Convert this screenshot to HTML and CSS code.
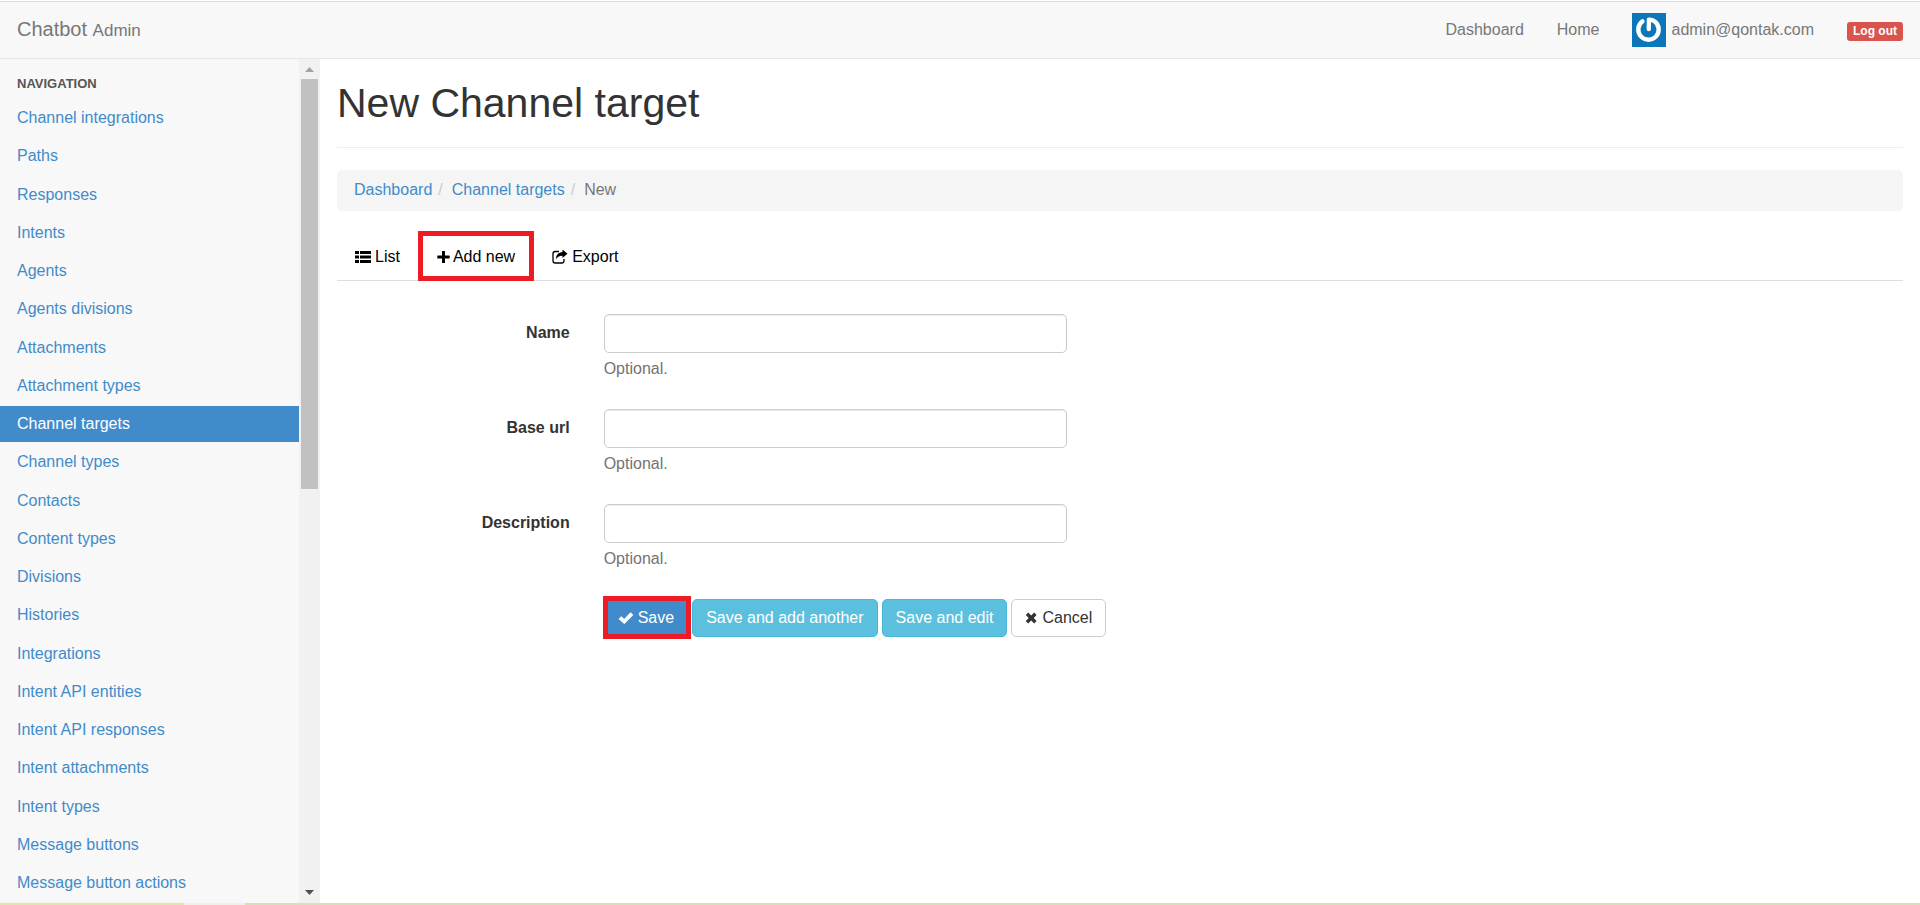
FILE: index.html
```html
<!DOCTYPE html>
<html lang="en">
<head>
<meta charset="utf-8">
<title>New Channel target</title>
<link rel="stylesheet" href="styles.css">
</head>
<body>
<header class="navbar">
  <a class="brand" href="#">Chatbot <small>Admin</small></a>
  <nav class="top-links">
    <a href="#">Dashboard</a>
    <a href="#">Home</a>
    <a class="user" href="#">
      <svg class="avatar" viewBox="0 0 34 34" aria-hidden="true"><rect width="34" height="34" fill="#0b76b8"/><path d="M10.500 8.300A10.200 10.200 0 1 0 22.500 8.300Q20 6.600 16.800 6.800V16" fill="none" stroke="#fff" stroke-width="4.400" stroke-linecap="round" stroke-linejoin="round"/><path d="M13.600 4.500V13" stroke="#0b76b8" stroke-width="1.400"/></svg>
      <span>admin@qontak.com</span>
    </a>
    <a class="logout" href="#">Log out</a>
  </nav>
</header>
<div class="layout">
  <aside class="sidebar">
    <div class="sidebar-body">
      <h2 class="nav-title">NAVIGATION</h2>
      <nav class="side-links">
        <a href="#">Channel integrations</a>
        <a href="#">Paths</a>
        <a href="#">Responses</a>
        <a href="#">Intents</a>
        <a href="#">Agents</a>
        <a href="#">Agents divisions</a>
        <a href="#">Attachments</a>
        <a href="#">Attachment types</a>
        <a class="active" href="#">Channel targets</a>
        <a href="#">Channel types</a>
        <a href="#">Contacts</a>
        <a href="#">Content types</a>
        <a href="#">Divisions</a>
        <a href="#">Histories</a>
        <a href="#">Integrations</a>
        <a href="#">Intent API entities</a>
        <a href="#">Intent API responses</a>
        <a href="#">Intent attachments</a>
        <a href="#">Intent types</a>
        <a href="#">Message buttons</a>
        <a href="#">Message button actions</a>
      </nav>
    </div>
    <div class="scrollbar" aria-hidden="true">
      <svg class="arrow" viewBox="0 0 21 20"><path d="M6 13 10.500 8 15 13z" fill="#a3a3a3"/></svg>
      <div class="track"><div class="thumb"></div></div>
      <svg class="arrow" viewBox="0 0 21 20"><path d="M6 7 15 7 10.500 12z" fill="#505050"/></svg>
    </div>
  </aside>
  <main class="content">
    <h1 class="page-title">New Channel target</h1>
    <ol class="breadcrumb">
      <li><a href="#">Dashboard</a></li>
      <li><a href="#">Channel targets</a></li>
      <li class="current">New</li>
    </ol>
    <nav class="tabs">
      <a href="#"><svg class="icon" viewBox="0 0 16 16"><path d="M0 2h4v3H0zM5 2h11v3H5zM0 6.500h4v3H0zM5 6.500h11v3H5zM0 11h4v3H0zM5 11h11v3H5z"/></svg>List</a>
      <a class="marked" href="#"><svg class="icon" viewBox="0 0 16 16"><path d="M5 2.300Q5 2 5.400 2H7.600Q8 2 8 2.300V6.500H12.300Q12.700 6.500 12.700 6.900V9.100Q12.700 9.500 12.300 9.500H8V13.700Q8 14 7.600 14H5.400Q5 14 5 13.700V9.500H.7Q.3 9.500 .3 9.100V6.900Q.3 6.500 .7 6.500H5z"/></svg>Add new</a>
      <a href="#"><svg class="icon" viewBox="0 0 16 16"><path d="M7 2.500H3.200Q1 2.500 1 4.700V11.800Q1 14 3.200 14H9.800Q12 14 12 11.800V10" fill="none" stroke="#000" stroke-width="1.300"/><path d="M10.500 .5 15.500 4.700 10.500 9V6.700Q6 6.500 3.700 10.500 4 3.500 10.500 3z"/></svg>Export</a>
    </nav>
    <form class="form">
      <label for="name">Name</label>
      <div class="field"><input id="name" type="text"><p>Optional.</p></div>
      <label for="base-url">Base url</label>
      <div class="field"><input id="base-url" type="text"><p>Optional.</p></div>
      <label for="description">Description</label>
      <div class="field"><input id="description" type="text"><p>Optional.</p></div>
      <div class="actions">
        <button class="btn primary" type="submit"><svg class="icon" viewBox="0 0 16 16"><path d="M.8 8.700 3 6.500Q3.300 6.200 3.600 6.500L6.200 8.900 12.300 2.600Q12.600 2.300 12.900 2.600L15.100 4.700Q15.400 5 15.100 5.300L6.600 13.800Q6.200 14.100 5.900 13.800L.8 9.200Q.5 8.900 .8 8.700z"/></svg>Save</button>
        <button class="btn info" type="submit">Save and add another</button>
        <button class="btn info" type="submit">Save and edit</button>
        <button class="btn plain" type="button"><svg class="icon" viewBox="1 0 13 16"><path d="M1.800 5 4.200 2.500 7.200 5.500 10.200 2.500 12.600 5 9.700 8 12.600 11 10.200 13.500 7.200 10.500 4.200 13.500 1.800 11 4.700 8z"/></svg>Cancel</button>
      </div>
    </form>
  </main>
</div>
<footer class="strip"></footer>
</body>
</html>
```
FILE: styles.css
```css
* { box-sizing: border-box; }
body {
  margin: 0;
  height: 100vh;
  display: flex;
  flex-direction: column;
  overflow: hidden;
  font: 16px/22px "Liberation Sans", Arial, sans-serif;
  color: #333;
  background: #fff;
}
a { color: #428bca; text-decoration: none; }
.navbar {
  flex: none;
  display: flex;
  justify-content: space-between;
  align-items: center;
  height: 58px;
  margin-top: 1px;
  padding: 0 17px;
  background: #f8f8f8;
  border-top: 1px solid #dadcdc;
  border-bottom: 1px solid #e7e7e7;
}
.navbar a { color: #777; }
.brand { font-size: 20px; }
.brand small { font-size: 17px; }
.top-links { display: flex; align-items: center; gap: 33px; }
.user { display: flex; align-items: center; gap: 5px; }
.avatar { width: 34px; height: 34px; }
.navbar .logout {
  padding: 0 6px;
  font-size: 12px;
  line-height: 19px;
  font-weight: bold;
  color: #fff;
  background: #d9534f;
  border-radius: 3px;
  margin-top: 3px;
}
.layout { flex: 1; min-height: 0; display: flex; }
.sidebar { flex: none; width: 320px; display: flex; background: #f8f8f8; }
.sidebar-body { flex: 1; display: flex; flex-direction: column; padding: 15px 0 2px; }
.nav-title { margin: 0 0 6px; padding: 0 17px; font-size: 13px; line-height: 20px; color: #555; }
.side-links { flex: 1; display: flex; flex-direction: column; justify-content: space-between; }
.side-links a { padding: 7px 17px; }
.side-links .active { color: #fff; background: #428bca; }
.scrollbar { width: 21px; display: flex; flex-direction: column; background: #f1f1f1; }
.arrow { display: block; width: 21px; height: 20px; }
.track { flex: 1; padding: 0 2px; }
.thumb { height: 51%; background: #c1c1c1; }
.content { flex: 1; padding: 0 17px; }
.page-title {
  margin: 0 0 22px;
  padding: 21px 0;
  font-size: 41px;
  line-height: 46px;
  font-weight: normal;
  border-bottom: 1px solid #eee;
}
.breadcrumb {
  display: flex;
  margin: 0 0 22px;
  padding: 9px 17px 10px;
  list-style: none;
  background: #f5f5f5;
  border-radius: 5px;
}
.breadcrumb li + li::before { content: "/"; padding: 0 9px 0 6px; color: #ccc; }
.breadcrumb .current { color: #777; }
.tabs { display: flex; gap: 1px; border-bottom: 1px solid #ddd; }
.tabs a { position: relative; display: flex; align-items: center; padding: 13px 18px 12px; color: #000; }
.icon { width: 16px; height: 16px; margin-right: 4px; fill: currentColor; }
.tabs .marked .icon { margin-right: 0; }
.marked::after, .primary::after {
  content: "";
  position: absolute;
  border: 5px solid #ed1c24;
}
.marked::after { inset: -2px -1px -1px -1px; }
.form { display: grid; grid-template-columns: 2fr 10fr; margin: 33px -17px 0; }
.form label { padding: 8px 17px; text-align: right; font-weight: bold; }
.field { padding: 0 17px 29px; }
.field input {
  display: block;
  width: 463px;
  height: 39px;
  padding: 7px 14px;
  font: inherit;
  border: 1px solid #ccc;
  border-radius: 5px;
  box-shadow: inset 0 1px 1px rgba(0, 0, 0, 0.08);
}
.field p { margin: 5px 0 0; color: #737373; }
.actions { grid-column: 2; display: flex; gap: 4px; padding: 0 17px; }
.btn {
  position: relative;
  display: flex;
  align-items: center;
  height: 38px;
  padding: 0 13px;
  font: inherit;
  border: 1px solid;
  border-radius: 5px;
}
.primary { color: #fff; background: #428bca; border-color: #357ebd; }
.primary::after { inset: -4px -4px -3px -2px; }
.info { color: #fff; background: #5bc0de; border-color: #46b8da; }
.plain { color: #333; background: #fff; border-color: #ccc; }
.plain .icon { width: 13px; }
.strip { flex: none; height: 2px; background: linear-gradient(90deg, #e2e7a3 0 184px, #f0f0e4 184px 245px, #dadfb9 245px); }
```
